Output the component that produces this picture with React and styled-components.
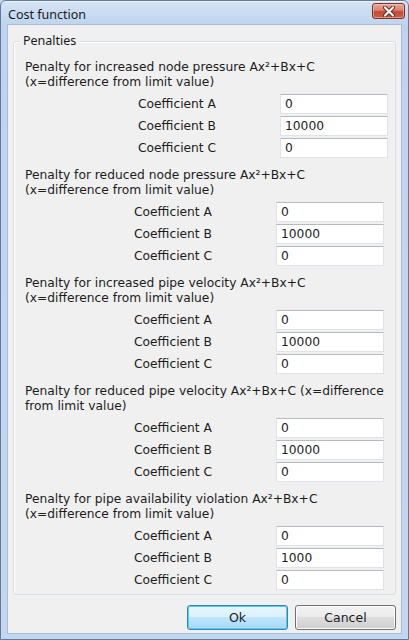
import React from "react";
import styled, { createGlobalStyle } from "styled-components";

const Global = createGlobalStyle`
  html, body { margin: 0; padding: 0; background: #c2d7ee; }
  * { box-sizing: border-box; }
`;

const Window = styled.div`
  width: 409px;
  height: 640px;
  border: 1px solid #61799a;
  border-radius: 6px 6px 0 0;
  background: linear-gradient(180deg, #d6e4f5 0px, #bed4ee 24px, #c3d8ef 100%);
  display: flex;
  flex-direction: column;
  padding: 0 6px 5px 6px;
  box-shadow: inset 0 1px 0 #eef4fb;
`;

const TitleBar = styled.div`
  height: 23px;
  display: flex;
  align-items: flex-start;
  justify-content: space-between;
  padding: 0 0 0 1px;
`;

const Title = styled.div`
  font-family: "Noto Sans", "Open Sans", sans-serif;
  font-size: 12.5px;
  color: #1a1a1a;
  line-height: 16px;
  padding-top: 6px;
`;

const CloseButton = styled.div`
  width: 33px;
  height: 16px;
  margin-top: 2px;
  margin-right: -3px;
  border: 1px solid #7a3226;
  border-radius: 3px;
  background: linear-gradient(180deg, #e9a99b 0%, #d9816f 45%, #c24a37 55%, #c7604c 100%);
  box-shadow: inset 0 0 0 1px rgba(255, 220, 210, 0.45);
  display: flex;
  align-items: center;
  justify-content: center;
`;

const Client = styled.div`
  flex: 1;
  background: #f0f0f0;
  border: 1px solid #a9bcd3;
  display: flex;
  flex-direction: column;
  padding: 16px 5px 3px 5px;
`;

const GroupBox = styled.div`
  position: relative;
  height: 554px;
  border: 1px solid #d5dfe5;
  border-radius: 3px;
  box-shadow: inset 1px 1px 0 #ffffff;
  padding: 18px 0 0 11px;
  display: flex;
  flex-direction: column;
  gap: 10px;
`;

const Legend = styled.div`
  position: absolute;
  top: -9px;
  left: 6px;
  padding: 0 3px;
  background: #f0f0f0;
  font-family: "Noto Sans", "Open Sans", sans-serif;
  font-size: 12.5px;
  line-height: 16px;
  color: #1a1a1a;
`;

const Section = styled.div`
  display: flex;
  flex-direction: column;
  gap: 4px;
`;

const Heading = styled.div`
  font-family: "DejaVu Sans", Verdana, sans-serif;
  font-size: 12.25px;
  line-height: 15px;
  color: #1c1c1c;
  white-space: nowrap;
`;

const Rows = styled.div`
  display: grid;
  grid-template-columns: 142px 108px;
  row-gap: 2px;
  margin-left: ${(p) => 109 + (p.$shift || 0)}px;
`;

const Label = styled.div`
  font-family: "DejaVu Sans", Verdana, sans-serif;
  font-size: 12.25px;
  line-height: 20px;
  height: 20px;
  color: #1c1c1c;
  white-space: nowrap;
`;

const Field = styled.div`
  height: 20px;
  background: #ffffff;
  border: 1px solid #dfe3e9;
  border-top-color: #b5b9c0;
  padding-left: 4px;
  font-family: "DejaVu Sans", Verdana, sans-serif;
  font-size: 12.25px;
  line-height: 18px;
  color: #1c1c1c;
`;

const ButtonBar = styled.div`
  display: flex;
  justify-content: flex-end;
  gap: 7px;
  margin-top: 10px;
`;

const Button = styled.div`
  width: 101px;
  height: 25px;
  border-radius: 3px;
  border: 1px solid ${(p) => (p.$default ? "#3c7fb1" : "#707070")};
  background: ${(p) =>
    p.$default
      ? "linear-gradient(180deg, #eaf6fd 0%, #d9f0fc 50%, #bee6fd 50%, #a7d9f5 100%)"
      : "linear-gradient(180deg, #f2f2f2 0%, #ebebeb 50%, #dddddd 50%, #cfcfcf 100%)"};
  box-shadow: inset 0 0 0 1px ${(p) => (p.$default ? "#48d4fc" : "#fcfcfc")};
  display: flex;
  align-items: center;
  justify-content: center;
  font-family: "DejaVu Sans", Verdana, sans-serif;
  font-size: 12.5px;
  color: #1c1c1c;
`;

const sections = [
  {
    lines: ["Penalty for increased node pressure Ax²+Bx+C", "(x=difference from limit value)"],
    values: ["0", "10000", "0"],
    shift: 4,
  },
  {
    lines: ["Penalty for reduced node pressure Ax²+Bx+C", "(x=difference from limit value)"],
    values: ["0", "10000", "0"],
  },
  {
    lines: ["Penalty for increased pipe velocity Ax²+Bx+C", "(x=difference from limit value)"],
    values: ["0", "10000", "0"],
  },
  {
    lines: ["Penalty for reduced pipe velocity Ax²+Bx+C (x=difference", "from limit value)"],
    values: ["0", "10000", "0"],
  },
  {
    lines: ["Penalty for pipe availability violation Ax²+Bx+C", "(x=difference from limit value)"],
    values: ["0", "1000", "0"],
  },
];

const letters = ["A", "B", "C"];

export default function App() {
  return (
    <>
      <Global />
      <Window>
        <TitleBar>
          <Title>Cost function</Title>
          <CloseButton>
            <svg width="14" height="11" viewBox="0 0 14 11">
              <path d="M3 1.5 L11 9.5 M11 1.5 L3 9.5" stroke="#6a231a" strokeWidth="4" strokeLinecap="round" />
              <path d="M3 1.5 L11 9.5 M11 1.5 L3 9.5" stroke="#ffffff" strokeWidth="2.2" strokeLinecap="round" />
            </svg>
          </CloseButton>
        </TitleBar>
        <Client>
          <GroupBox>
            <Legend>Penalties</Legend>
            {sections.map((s, i) => (
              <Section key={i}>
                <Heading>
                  {s.lines[0]}
                  <br />
                  {s.lines[1]}
                </Heading>
                <Rows $shift={s.shift}>
                  {s.values.map((v, j) => (
                    <React.Fragment key={j}>
                      <Label>Coefficient {letters[j]}</Label>
                      <Field>{v}</Field>
                    </React.Fragment>
                  ))}
                </Rows>
              </Section>
            ))}
          </GroupBox>
          <ButtonBar>
            <Button $default>Ok</Button>
            <Button>Cancel</Button>
          </ButtonBar>
        </Client>
      </Window>
    </>
  );
}
